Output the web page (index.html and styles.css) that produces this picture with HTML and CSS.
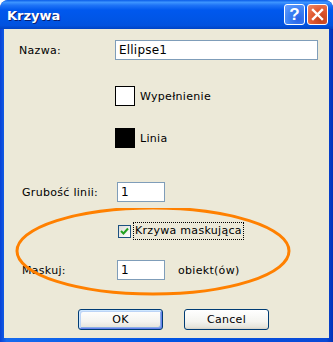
FILE: index.html
```html
<!DOCTYPE html>
<html lang="pl">
<head>
    <meta charset="UTF-8">
    <title>Krzywa</title>
    <link rel="stylesheet" href="styles.css">
</head>
<body>
    <div class="window">
        <!-- Title bar -->
        <div class="titlebar">
            <span class="title">Krzywa</span>
            <div class="title-buttons">
                <span class="tbtn help">?</span>
                <span class="tbtn close">
                    <svg width="13" height="13" viewBox="0 0 13 13"><path d="M2 2 L11 11 M11 2 L2 11" stroke="#fff" stroke-width="2.4" stroke-linecap="square"/></svg>
                </span>
            </div>
        </div>

        <div class="client">
            <div class="row row-name">
                <label class="lbl lbl-name">Nazwa:</label>
                <input class="field field-wide" type="text" value="Ellipse1">
            </div>

            <div class="row row-fill">
                <span class="swatch swatch-white"></span>
                <span class="swatch-text">Wypełnienie</span>
            </div>

            <div class="row row-line">
                <span class="swatch swatch-black"></span>
                <span class="swatch-text">Linia</span>
            </div>

            <div class="row row-width">
                <label class="lbl">Grubość linii:</label>
                <input class="field field-small" type="text" value="1">
            </div>

            <div class="row row-check">
                <span class="checkbox">
                    <svg width="9" height="9" viewBox="0 0 9 9"><path d="M1 4 L3.5 6.5 L8 1.5" fill="none" stroke="#21a121" stroke-width="2"/></svg>
                </span>
                <span class="check-text">Krzywa maskująca</span>
            </div>

            <div class="row row-mask">
                <label class="lbl">Maskuj:</label>
                <input class="field field-small" type="text" value="1">
                <span class="unit">obiekt(ów)</span>
            </div>

            <div class="row row-buttons">
                <button class="btn btn-default">OK</button>
                <button class="btn">Cancel</button>
            </div>

            <!-- Orange annotation ellipse -->
            <svg class="annotation" width="325" height="100" viewBox="0 0 325 100">
                <ellipse cx="149" cy="43" rx="136" ry="43" fill="none" stroke="#ff8000" stroke-width="3"/>
            </svg>
        </div>
    </div>
</body>
</html>
```

FILE: styles.css
```css
body {
    margin: 0;
    padding: 0;
    background: #fff;
    font-family: "DejaVu Sans", Verdana, sans-serif;
    font-size: 11px;
    letter-spacing: 0.3px;
    color: #000;
}
.window {
    width: 333px;
    height: 342px;
    background: linear-gradient(to right, #0842d6 0%, #166aee 2%, #0054e3 50%, #0a49d6 98%, #0031b8 100%);
    border-radius: 8px 8px 0 0;
    display: flex;
    flex-direction: column;
    overflow: hidden;
}
.titlebar {
    height: 29px;
    flex: none;
    display: flex;
    align-items: center;
    justify-content: space-between;
    padding: 0 5px 0 7px;
    background: linear-gradient(to bottom, #0a5ce8 0%, #3d95ff 8%, #1f74f6 18%, #0058ee 35%, #0055e5 70%, #0252de 88%, #0043c4 100%);
    border-radius: 8px 8px 0 0;
}
.title {
    font-family: "DejaVu Sans", sans-serif;
    font-weight: bold;
    font-size: 13px;
    letter-spacing: 0;
    color: #fff;
    text-shadow: 1px 1px 0 #0a1e6e;
    margin-top: 1px;
}
.title-buttons {
    display: flex;
    gap: 2px;
}
.tbtn {
    width: 19px;
    height: 19px;
    border: 1px solid #fff;
    border-radius: 3px;
    display: flex;
    align-items: center;
    justify-content: center;
    color: #fff;
}
.help {
    background: radial-gradient(circle at 70% 75%, #2a63e8 0%, #3c81f3 50%, #6aa0ff 100%);
    font-family: "Liberation Sans", sans-serif;
    font-weight: bold;
    font-size: 17px;
    letter-spacing: 0;
}
.close {
    background: radial-gradient(circle at 70% 75%, #c2401a 0%, #e15a32 50%, #f08c6a 100%);
}
.client {
    flex: 1;
    margin: 0 4px 4px 4px;
    background: #ece9d8;
    display: flex;
    flex-direction: column;
    position: relative;
}
.row {
    display: flex;
    align-items: center;
}
.lbl {
    width: 95px;
    padding-left: 18px;
}
.lbl-name {
    width: 96px;
    padding-left: 15px;
}
.field {
    height: 20px;
    box-sizing: border-box;
    border: 1px solid #7f9db9;
    background: #fff;
    font-family: "DejaVu Sans", sans-serif;
    font-size: 12px;
    letter-spacing: 0.2px;
    padding: 0 3px;
    margin: 0;
    outline: none;
}
.field-wide {
    width: 203px;
}
.field-small {
    width: 48px;
}
.row-name {
    margin-top: 11px;
}
.row-fill {
    margin-top: 26px;
    padding-left: 111px;
}
.row-line {
    margin-top: 22px;
    padding-left: 111px;
}
.swatch {
    width: 20px;
    height: 20px;
    box-sizing: border-box;
    border: 1px solid #000;
    margin-right: 5px;
}
.swatch-white {
    background: #fff;
}
.swatch-black {
    background: #000;
}
.row-width {
    margin-top: 34px;
}
.row-check {
    margin-top: 20px;
    padding-left: 114px;
}
.checkbox {
    width: 13px;
    height: 13px;
    box-sizing: border-box;
    border: 1px solid #1c5180;
    background: linear-gradient(135deg, #dcdcd7 0%, #fff 100%);
    display: flex;
    align-items: center;
    justify-content: center;
    margin-right: 2px;
}
.check-text {
    border: 1px dotted #000;
    padding: 1px 1px 2px 1px;
}
.row-mask {
    margin-top: 20px;
}
.unit {
    margin-left: 13px;
}
.row-buttons {
    margin-top: 29px;
    padding-left: 74px;
    gap: 21px;
}
.btn {
    width: 85px;
    height: 21px;
    border: 1px solid #003c74;
    border-radius: 3px;
    background: linear-gradient(to bottom, #fff 0%, #f4f4f0 60%, #e6e5dc 90%, #d6d0c5 100%);
    font-family: "DejaVu Sans", sans-serif;
    font-size: 11px;
    letter-spacing: 0.3px;
    padding: 0;
    color: #000;
}
.btn-default {
    box-shadow: inset 1px 1px 0 #cee7ff, inset -1px -1px 0 #6982ee, inset 2px 2px 0 #bcd4f6, inset -2px -2px 0 #89ade4;
}
.annotation {
    position: absolute;
    left: 0;
    top: 179px;
}
```
